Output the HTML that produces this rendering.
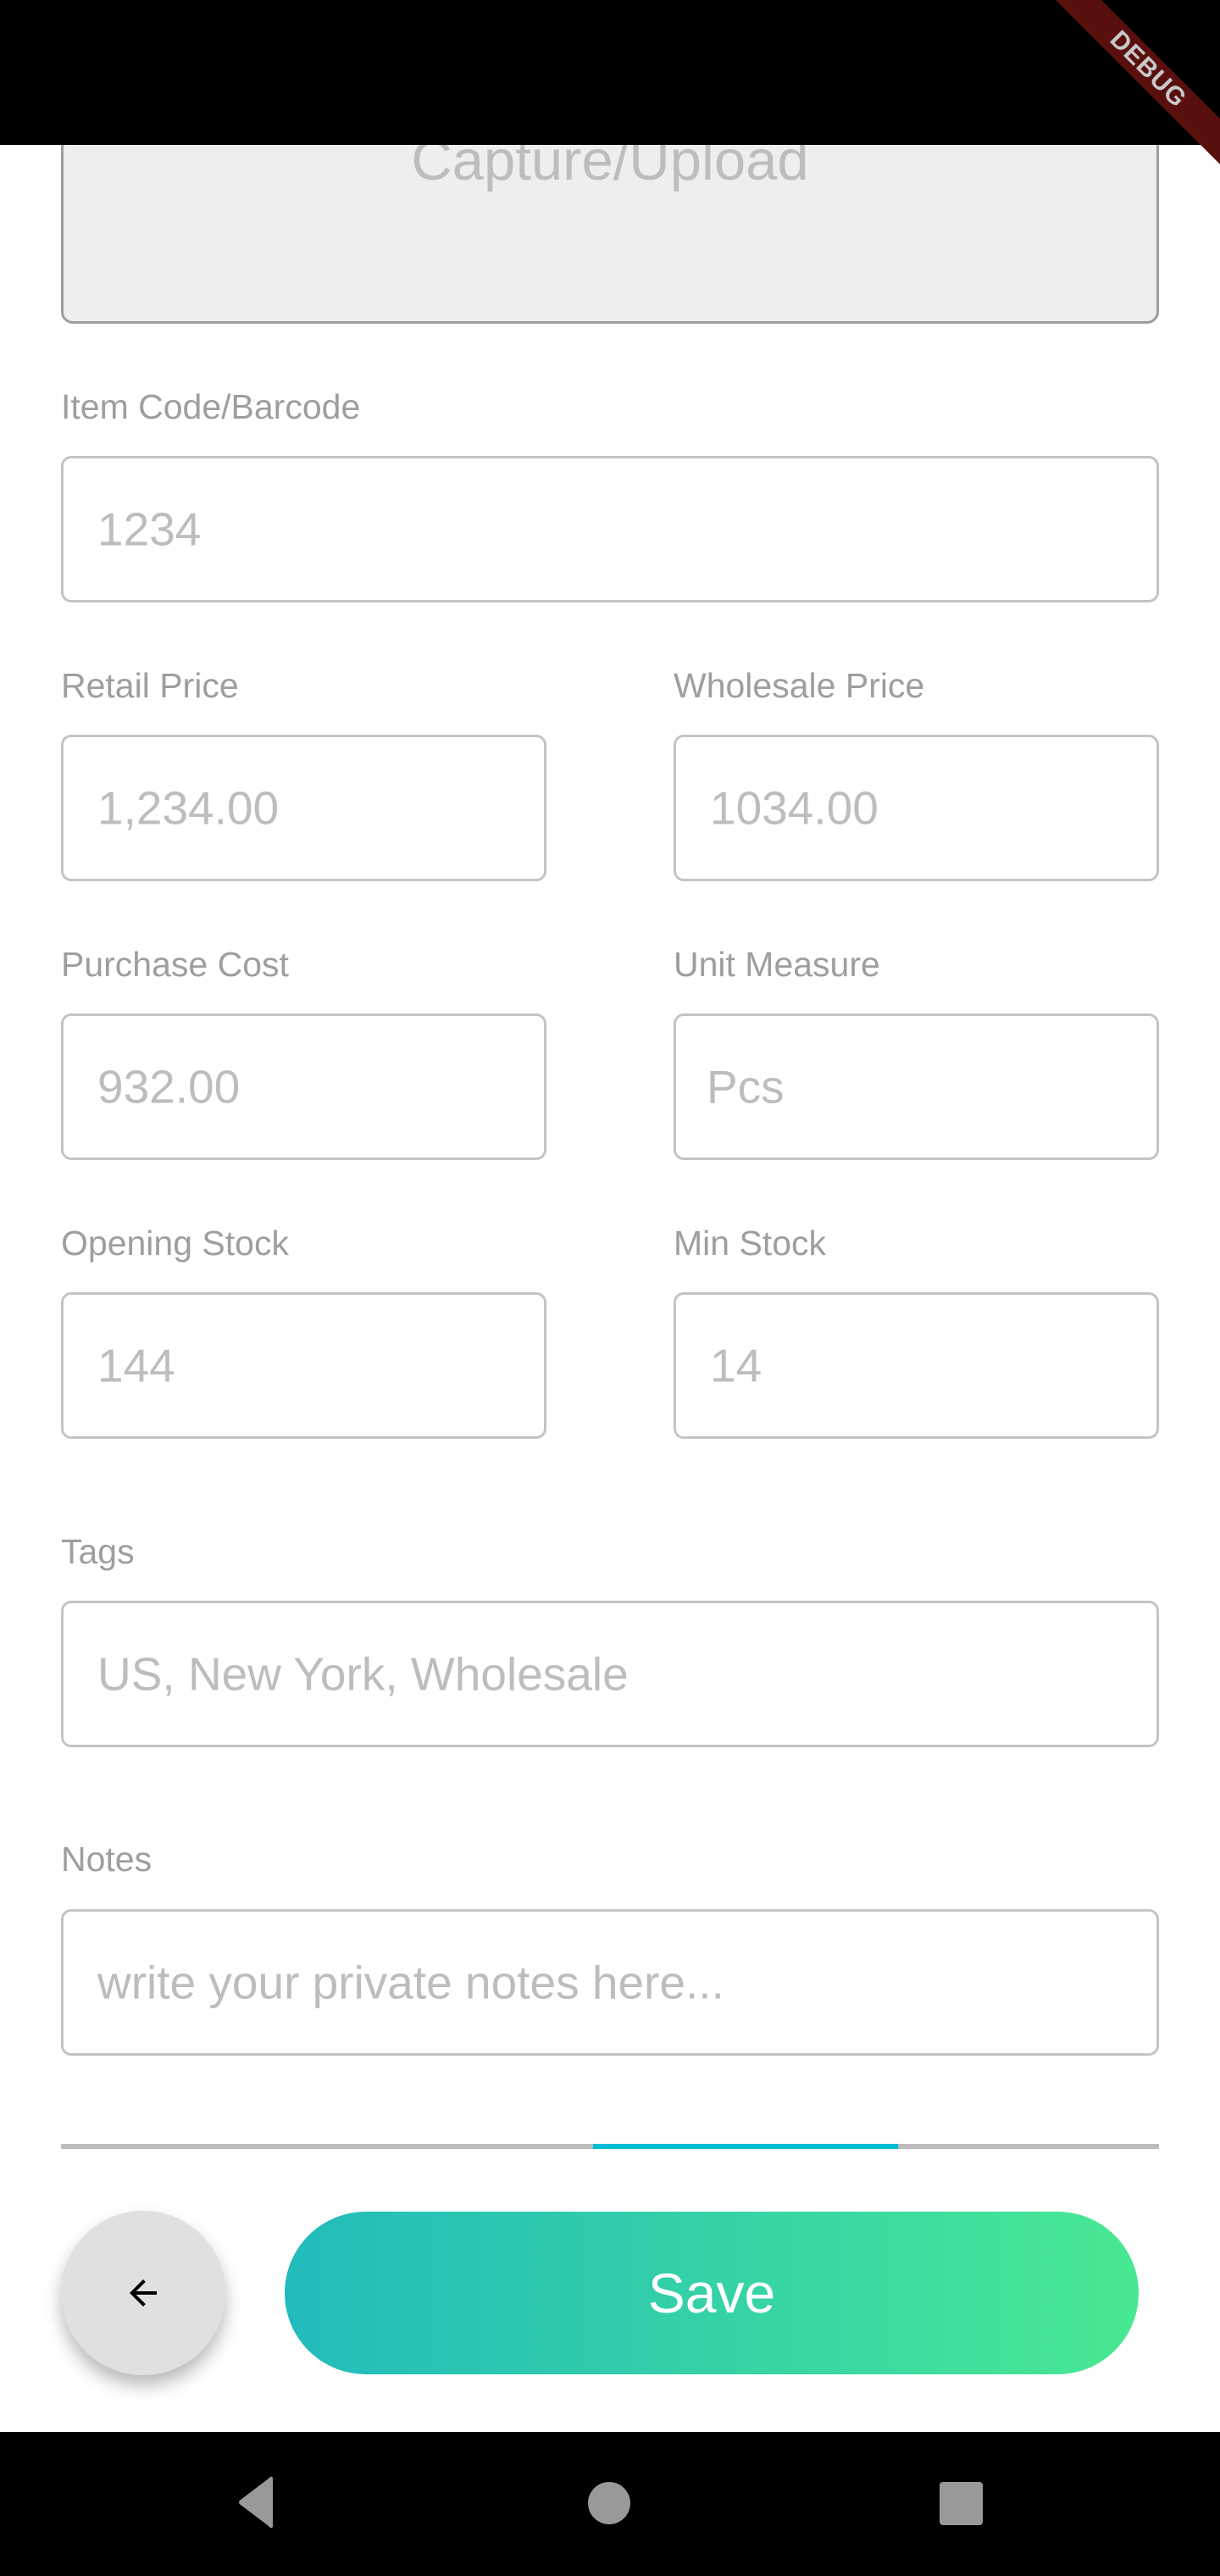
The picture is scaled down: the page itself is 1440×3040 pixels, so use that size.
<!DOCTYPE html>
<html><head><meta charset="utf-8"><style>
*{margin:0;padding:0;box-sizing:border-box}
body{width:1440px;height:3040px;position:relative;background:#fff;font-family:"Liberation Sans",sans-serif;overflow:hidden}
.abs{position:absolute}
.lbl{position:absolute;font-size:41px;color:#9e9e9e;line-height:1}
.in{position:absolute;border:3px solid #c4c4c4;border-radius:12px;background:#fff}
.ph{position:absolute;left:40px;top:50%;transform:translateY(-50%);font-size:55px;color:#bdbdbd;line-height:1;white-space:nowrap}
</style></head><body>
<div class="abs" style="left:72px;top:40px;width:1296px;height:342px;background:#eee;border:3px solid #9e9e9e;border-radius:14px"></div>
<div class="abs" style="left:72px;width:1296px;top:156px;text-align:center;font-size:67px;color:#bdbdbd;line-height:1">Capture/Upload</div>
<div class="abs" style="left:0;top:0;width:1440px;height:171px;background:#000"></div>
<div class="abs" style="left:1115px;top:63px;width:480px;height:38px;background:#5a0f0f;transform:rotate(45deg);transform-origin:center;color:#c8c8c8;font-weight:bold;font-size:30px;text-align:center;line-height:38px;letter-spacing:1px">DEBUG</div>

<div class="lbl" style="left:72px;top:460px">Item Code/Barcode</div>
<div class="in" style="left:72px;top:538px;width:1296px;height:173px"><span class="ph">1234</span></div>

<div class="lbl" style="left:72px;top:789px">Retail Price</div>
<div class="lbl" style="left:795px;top:789px">Wholesale Price</div>
<div class="in" style="left:72px;top:867px;width:573px;height:173px"><span class="ph">1,234.00</span></div>
<div class="in" style="left:795px;top:867px;width:573px;height:173px"><span class="ph">1034.00</span></div>

<div class="lbl" style="left:72px;top:1118px">Purchase Cost</div>
<div class="lbl" style="left:795px;top:1118px">Unit Measure</div>
<div class="in" style="left:72px;top:1196px;width:573px;height:173px"><span class="ph">932.00</span></div>
<div class="in" style="left:795px;top:1196px;width:573px;height:173px"><span class="ph" style="left:36px">Pcs</span></div>

<div class="lbl" style="left:72px;top:1447px">Opening Stock</div>
<div class="lbl" style="left:795px;top:1447px">Min Stock</div>
<div class="in" style="left:72px;top:1525px;width:573px;height:173px"><span class="ph">144</span></div>
<div class="in" style="left:795px;top:1525px;width:573px;height:173px"><span class="ph">14</span></div>

<div class="lbl" style="left:72px;top:1811px">Tags</div>
<div class="in" style="left:72px;top:1889px;width:1296px;height:173px"><span class="ph">US, New York, Wholesale</span></div>

<div class="lbl" style="left:72px;top:2174px">Notes</div>
<div class="in" style="left:72px;top:2253px;width:1296px;height:173px"><span class="ph">write your private notes here...</span></div>

<div class="abs" style="left:72px;top:2530px;width:1296px;height:6px;background:#bdbdbd"></div>
<div class="abs" style="left:700px;top:2530px;width:360px;height:6px;background:#00bcd4"></div>

<div class="abs" style="left:72px;top:2609px;width:194px;height:194px;border-radius:50%;background:#e0e0e0;box-shadow:0 12px 20px rgba(0,0,0,0.28)"></div>
<svg class="abs" style="left:145px;top:2682px" width="48" height="48" viewBox="0 0 24 24"><path d="M20 11H7.83l5.59-5.59L12 4l-8 8 8 8 1.41-1.41L7.83 13H20v-2z" fill="#000"/></svg>
<div class="abs" style="left:336px;top:2610px;width:1008px;height:192px;border-radius:96px;background:linear-gradient(90deg,#22bbbb,#48e893);color:#fff;font-size:66px;text-align:center;line-height:192px">Save</div>

<div class="abs" style="left:0;top:2870px;width:1440px;height:170px;background:#000"></div>
<svg class="abs" style="left:270px;top:2920px" width="60" height="66" viewBox="0 0 60 66"><path d="M52 4 L52 62 Q50 65 47 61 L14 36 Q10 33 14 30 L47 5 Q50 1 52 4Z" fill="#999"/></svg>
<div class="abs" style="left:694px;top:2929px;width:50px;height:50px;border-radius:50%;background:#999"></div>
<div class="abs" style="left:1109px;top:2929px;width:51px;height:51px;border-radius:4px;background:#999"></div>
</body></html>
